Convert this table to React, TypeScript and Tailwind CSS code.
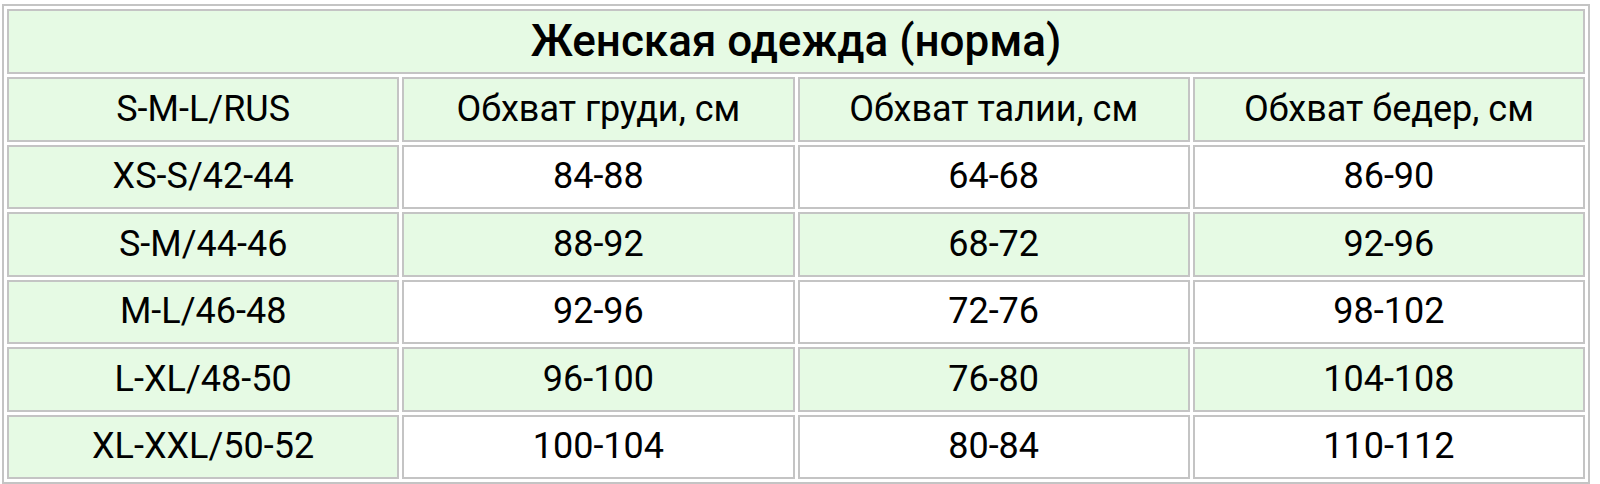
const HEAD = ['S-M-L/RUS', 'Обхват груди, см', 'Обхват талии, см', 'Обхват бедер, см'];

const ROWS = [
  ['XS-S/42-44', '84-88', '64-68', '86-90'],
  ['S-M/44-46', '88-92', '68-72', '92-96'],
  ['M-L/46-48', '92-96', '72-76', '98-102'],
  ['L-XL/48-50', '96-100', '76-80', '104-108'],
  ['XL-XXL/50-52', '100-104', '80-84', '110-112'],
];

const cell = 'border-2 border-[#c4c4c4] text-center align-middle p-0 leading-[1.2]';

export default function App() {
  return (
    <div className="bg-white w-[1600px] h-[484px] pt-[4px] pl-[2px] font-['Roboto',sans-serif] text-black">
      <table className="w-[1588px] border-separate border-spacing-[3px] border-2 border-[#c4c4c4] table-fixed">
        <tbody>
          <tr>
            <td colSpan={4} className={`${cell} h-[65px] bg-[#e6fae4] text-[44px] font-medium`}>
              Женская одежда (норма)
            </td>
          </tr>
          <tr>
            {HEAD.map((h) => (
              <td key={h} className={`${cell} h-[64.5px] bg-[#e6fae4] text-[36px]`}>
                {h}
              </td>
            ))}
          </tr>
          {ROWS.map((row, i) => (
            <tr key={row[0]}>
              {row.map((v, j) => (
                <td
                  key={j}
                  className={`${cell} h-[64.5px] text-[36px] ${j === 0 || i % 2 === 1 ? 'bg-[#e6fae4]' : 'bg-white'}`}
                >
                  {v}
                </td>
              ))}
            </tr>
          ))}
        </tbody>
      </table>
    </div>
  );
}
